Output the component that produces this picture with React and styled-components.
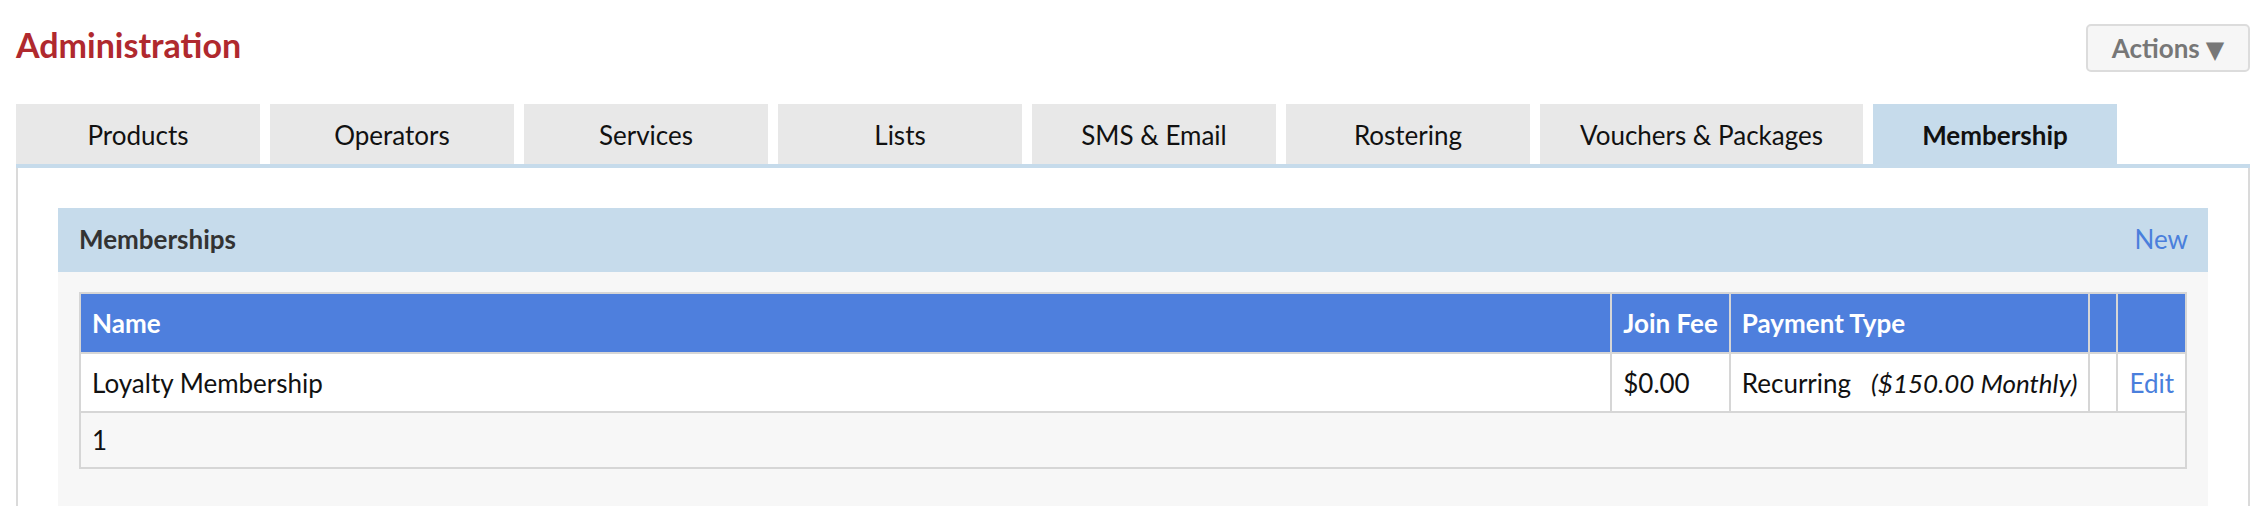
import React from "react";
import styled, { createGlobalStyle } from "styled-components";

const GlobalStyle = createGlobalStyle`
  html, body {
    margin: 0;
    padding: 0;
    background: #fff;
  }
  body {
    font-family: Lato, "Open Sans", "Liberation Sans", sans-serif;
    font-size: 26px;
    color: #111;
  }
`;

const Page = styled.div`
  padding: 0 14px 0 16px;
`;

const Header = styled.div`
  display: flex;
  justify-content: space-between;
  align-items: center;
  height: 48px;
  margin-top: 24px;
  margin-bottom: 32px;
`;

const Title = styled.h1`
  margin: 0 0 8px;
  font-size: 34px;
  font-weight: 700;
  color: #b0292e;
`;

const ActionsButton = styled.button`
  height: 48px;
  width: 164px;
  padding: 0;
  border: 2px solid #dcdcdc;
  border-radius: 5px;
  background: #f6f6f6;
  color: #777;
  font-family: inherit;
  font-size: 26px;
  font-weight: 700;
  cursor: pointer;
  .arrow {
    font-family: "DejaVu Sans", sans-serif;
    font-size: 24px;
    margin-left: 6px;
  }
`;

const Tabs = styled.ul`
  display: flex;
  gap: 10px;
  margin: 0;
  padding: 0;
  list-style: none;
  border-bottom: 4px solid #c6dbeb;
`;

const Tab = styled.li`
  min-width: 244px;
  box-sizing: border-box;
  height: 60px;
  padding: 2px 40px 0;
  display: flex;
  align-items: center;
  justify-content: center;
  background: ${(p) => (p.$active ? "#c6dbeb" : "#e8e8e8")};
  font-weight: ${(p) => (p.$active ? 700 : 400)};
  color: #111;
  white-space: nowrap;
`;

const Panel = styled.div`
  background: #fff;
  border-left: 2px solid #dadada;
  border-right: 2px solid #dadada;
  padding: 40px 40px 0;
`;

const SectionHead = styled.div`
  display: flex;
  justify-content: space-between;
  align-items: center;
  height: 64px;
  padding: 0 20px 2px 21px;
  box-sizing: border-box;
  background: #c6dbeb;
  h2 {
    margin: 0;
    font-size: 26px;
    font-weight: 700;
    color: #333;
  }
`;

const Link = styled.a`
  color: #4a7fdc;
  text-decoration: none;
  cursor: pointer;
`;

const SectionBody = styled.div`
  background: #f7f7f7;
  padding: 20px 21px 40px;
`;

const Table = styled.table`
  width: 100%;
  border-collapse: collapse;
  border: 2px solid #d6d6d6;
  th,
  td {
    border: 2px solid #d6d6d6;
    padding: 0 11px;
    text-align: left;
    white-space: nowrap;
  }
  th {
    height: 58px;
    background: #4e7fdd;
    color: #fff;
    font-weight: 700;
  }
  tbody td {
    height: 57px;
    background: #fff;
  }
  .fit {
    width: 1%;
  }
  .blank {
    min-width: 4px;
  }
`;

const FootCell = styled.td`
  height: 54px;
  background: #f7f7f7;
`;

const Note = styled.i`
  margin-left: 20px;
`;

const tabs = [
  "Products",
  "Operators",
  "Services",
  "Lists",
  "SMS & Email",
  "Rostering",
  "Vouchers & Packages",
  "Membership",
];

export default function App() {
  return (
    <>
      <GlobalStyle />
      <Page>
        <Header>
          <Title>Administration</Title>
          <ActionsButton>
            Actions<span className="arrow">▼</span>
          </ActionsButton>
        </Header>

        <Tabs>
          {tabs.map((t) => (
            <Tab key={t} $active={t === "Membership"}>
              {t}
            </Tab>
          ))}
        </Tabs>

        <Panel>
          <SectionHead>
            <h2>Memberships</h2>
            <Link>New</Link>
          </SectionHead>
          <SectionBody>
            <Table>
              <thead>
                <tr>
                  <th>Name</th>
                  <th className="fit">Join Fee</th>
                  <th className="fit">Payment Type</th>
                  <th className="fit blank"></th>
                  <th className="fit"></th>
                </tr>
              </thead>
              <tbody>
                <tr>
                  <td>Loyalty Membership</td>
                  <td className="fit">$0.00</td>
                  <td className="fit">
                    Recurring<Note>($150.00 Monthly)</Note>
                  </td>
                  <td className="fit blank"></td>
                  <td className="fit">
                    <Link>Edit</Link>
                  </td>
                </tr>
              </tbody>
              <tfoot>
                <tr>
                  <FootCell colSpan={5}>1</FootCell>
                </tr>
              </tfoot>
            </Table>
          </SectionBody>
        </Panel>
      </Page>
    </>
  );
}
